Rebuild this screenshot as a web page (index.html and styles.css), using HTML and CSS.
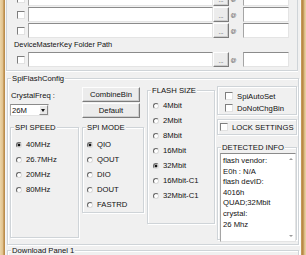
FILE: index.html
```html
<!DOCTYPE html>
<html lang="en">
<head>
    <meta charset="UTF-8">
    <title>Download Tool</title>
    <link rel="stylesheet" href="styles.css">
</head>
<body>
    <div class="window">
        <div class="edge edge-left"></div>

        <div class="client">
            <!-- bin paths -->
            <div class="paths">
                <div class="path-row">
                    <span class="check"></span>
                    <span class="field path-input"></span>
                    <span class="btn dots">...</span>
                    <span class="at">@</span>
                    <span class="field addr-input"></span>
                </div>
                <div class="path-row">
                    <span class="check"></span>
                    <span class="field path-input"></span>
                    <span class="btn dots">...</span>
                    <span class="at">@</span>
                    <span class="field addr-input"></span>
                </div>
                <div class="path-row">
                    <span class="check"></span>
                    <span class="field path-input"></span>
                    <span class="btn dots">...</span>
                    <span class="at">@</span>
                    <span class="field addr-input"></span>
                </div>
                <div class="path-label">DeviceMasterKey Folder Path</div>
                <div class="path-row">
                    <span class="check"></span>
                    <span class="field path-input"></span>
                    <span class="btn dots">...</span>
                    <span class="at">@</span>
                    <span class="field addr-input"></span>
                </div>
            </div>

            <!-- spi flash config -->
            <div class="group spi-config">
                <div class="group-title"><span>SpiFlashConfig</span></div>
                <div class="spi-cols">
                    <div class="col col-speed">
                        <div class="crystal-label">CrystalFreq :</div>
                        <div class="field combo">
                            <span class="combo-text">26M</span>
                            <span class="combo-arrow"></span>
                        </div>
                        <div class="group speed-group">
                            <div class="group-title"><span>SPI SPEED</span></div>
                            <div class="radio-list">
                                <div class="radio on"><i></i>40MHz</div>
                                <div class="radio"><i></i>26.7MHz</div>
                                <div class="radio"><i></i>20MHz</div>
                                <div class="radio"><i></i>80MHz</div>
                            </div>
                        </div>
                    </div>

                    <div class="col col-mode">
                        <div class="btn wide-btn combine">CombineBin</div>
                        <div class="btn wide-btn">Default</div>
                        <div class="group mode-group">
                            <div class="group-title"><span>SPI MODE</span></div>
                            <div class="radio-list">
                                <div class="radio on"><i></i>QIO</div>
                                <div class="radio"><i></i>QOUT</div>
                                <div class="radio"><i></i>DIO</div>
                                <div class="radio"><i></i>DOUT</div>
                                <div class="radio"><i></i>FASTRD</div>
                            </div>
                        </div>
                    </div>

                    <div class="col col-size">
                        <div class="group size-group">
                            <div class="group-title"><span>FLASH SIZE</span></div>
                            <div class="radio-list">
                                <div class="radio"><i></i>4Mbit</div>
                                <div class="radio"><i></i>2Mbit</div>
                                <div class="radio"><i></i>8Mbit</div>
                                <div class="radio"><i></i>16Mbit</div>
                                <div class="radio on"><i></i>32Mbit</div>
                                <div class="radio"><i></i>16Mbit-C1</div>
                                <div class="radio"><i></i>32Mbit-C1</div>
                            </div>
                        </div>
                    </div>

                    <div class="col col-info">
                        <div class="group auto-box">
                            <div class="check-row"><span class="check"></span>SpiAutoSet</div>
                            <div class="check-row"><span class="check"></span>DoNotChgBin</div>
                        </div>
                        <div class="group lock-box">
                            <div class="check-row"><span class="check"></span>LOCK SETTINGS</div>
                        </div>
                        <div class="group info-group">
                            <div class="group-title"><span>DETECTED INFO</span></div>
                            <div class="field info-text">
                                <div class="info-lines">
                                    flash vendor:<br>
                                    E0h : N/A<br>
                                    flash devID:<br>
                                    4016h<br>
                                    QUAD;32Mbit<br>
                                    crystal:<br>
                                    26 Mhz
                                </div>
                                <div class="scrollbar">
                                    <span class="arrow-up"></span>
                                    <span class="arrow-down"></span>
                                </div>
                            </div>
                        </div>
                    </div>
                </div>
            </div>

            <div class="group download">
                <div class="group-title"><span>Download Panel 1</span></div>
            </div>
        </div>

        <div class="edge edge-right"></div>
    </div>
</body>
</html>
```

FILE: styles.css
```css
* {
    margin: 0;
    padding: 0;
    box-sizing: border-box;
}

body {
    width: 306px;
    height: 255px;
    overflow: hidden;
    background: #f0f0f0;
    font-family: 'Liberation Sans', Arial, sans-serif;
    font-size: 7.7px;
    color: #111;
}

.window {
    display: flex;
    height: 255px;
}

.edge {
    flex: none;
    width: 6px;
}

.edge-left {
    background: linear-gradient(to right, #ecd5a8 0, #e0c08a 3px, #b4833f 4px, #c49858 5px, #f7f7f7 5px);
}

.edge-right {
    background: linear-gradient(to right, #f7f7f7 0, #f7f7f7 1px, #c89e60 1px, #b4833f 3px, #d6b47c 4px, #ecd5a8 6px);
}

.client {
    flex: 1;
    min-width: 0;
}

/* shared controls */
.field {
    background: #fff;
    border: 1px solid;
    border-color: #8b8b8b #e4e4e4 #e4e4e4 #a5a5a5;
}

.btn {
    display: flex;
    align-items: center;
    justify-content: center;
    background: #ececec;
    border: 1px solid;
    border-color: #fdfdfd #7c7c7c #7c7c7c #fdfdfd;
    box-shadow: inset -1px -1px 0 #cdcdcd;
}

.check {
    flex: none;
    width: 8px;
    height: 8px;
    background: #fff;
    border: 1px solid;
    border-color: #7e7e7e #e2e2e2 #e2e2e2 #7e7e7e;
}

.group {
    border: 1px solid #cfd4d8;
    box-shadow: inset 1px 1px 0 #fff, 1px 1px 0 #fff;
}

.group-title {
    height: 9px;
    line-height: 9px;
    margin: -5px 0 0 3px;
    white-space: nowrap;
}

.group-title span {
    background: #f0f0f0;
    padding: 0 1px;
}

/* paths */
.paths {
    margin-top: -9px;
    margin-right: 2px;
    padding-bottom: 2px;
    border: 1px solid #cfd4d8;
    border-top: none;
    box-shadow: 0 1px 0 #fff;
}

.path-row {
    display: flex;
    align-items: flex-start;
    height: 16px;
    padding-left: 10px;
}

.path-row .check {
    margin-top: 4px;
    margin-right: 3px;
}

.path-input {
    width: 185px;
    height: 15px;
}

.dots {
    width: 16px;
    height: 15px;
    font-size: 6px;
    line-height: 1;
    padding-top: 3px;
}

.at {
    width: 9px;
    height: 15px;
    line-height: 17px;
    text-align: center;
    font-size: 6px;
    color: #555;
}

.addr-input {
    width: 46px;
    height: 15px;
    margin-left: 5px;
}

.path-label {
    height: 13px;
    line-height: 11px;
    padding-left: 7px;
    font-size: 7.4px;
}

/* spi flash config */
.spi-config {
    margin-top: 7px;
    margin-left: 1px;
    width: 292px;
    height: 167px;
}

.spi-cols {
    display: flex;
    padding-left: 2px;
}

.col {
    display: flex;
    flex-direction: column;
    flex: none;
}

.col-speed {
    width: 69px;
}

.crystal-label {
    margin-top: 8px;
    height: 9px;
    line-height: 9px;
    padding-left: 1px;
}

.combo {
    margin-top: 4px;
    width: 39px;
    height: 12px;
    display: flex;
    align-items: center;
    justify-content: space-between;
    padding-left: 1px;
}

.combo-arrow {
    width: 9px;
    height: 10px;
    background: #e8e8e8;
    border: 1px solid;
    border-color: #fff #8a8a8a #8a8a8a #fff;
    position: relative;
}

.combo-arrow::after {
    content: "";
    position: absolute;
    left: 1px;
    top: 3px;
    border-left: 2.5px solid transparent;
    border-right: 2.5px solid transparent;
    border-top: 3px solid #111;
}

.speed-group {
    margin-top: 11px;
    height: 111px;
}

.radio-list {
    display: flex;
    flex-direction: column;
}

.speed-group .radio-list {
    margin-top: 5px;
    padding-left: 5px;
}

.radio {
    display: flex;
    align-items: center;
    height: 15px;
    white-space: nowrap;
}

.radio i {
    flex: none;
    width: 6px;
    height: 6px;
    margin-right: 4px;
    border-radius: 50%;
    background: #fff;
    border: 1px solid;
    border-color: #666 #dadada #dadada #666;
}

.radio.on i {
    background: radial-gradient(circle, #111 0, #111 1.2px, #fff 1.8px);
}

.col-mode {
    width: 62px;
    margin-left: 3px;
}

.wide-btn {
    width: 58px;
    height: 15px;
}

.combine {
    margin-top: 4px;
    margin-bottom: 1px;
}

.mode-group {
    margin-top: 9px;
    height: 86px;
}

.mode-group .radio-list {
    margin-top: 5px;
    padding-left: 4px;
}

.col-size {
    width: 68px;
    margin-left: 3px;
}

.size-group {
    margin-top: 7px;
    height: 134px;
}

.size-group .radio-list {
    margin-top: 3px;
    padding-left: 5px;
}

.col-info {
    width: 80px;
    margin-left: 2px;
}

.check-row {
    display: flex;
    align-items: center;
    height: 12px;
    white-space: nowrap;
}

.check-row .check {
    margin-right: 4px;
}

.auto-box {
    margin-top: 3px;
    height: 29px;
    padding: 3px 0 0 7px;
}

.lock-box {
    margin-top: 4px;
    height: 16px;
    padding: 1px 0 0 2px;
}

.info-group {
    margin-top: 12px;
    height: 93px;
}

.info-text {
    margin: 1px 0 0 2px;
    height: 89px;
    display: flex;
}

.info-lines {
    flex: 1;
    padding: 2px 0 0 2px;
    line-height: 10.6px;
}

.scrollbar {
    width: 9px;
    display: flex;
    flex-direction: column;
    justify-content: space-between;
    align-items: center;
    padding: 4px 0;
}

.arrow-up,
.arrow-down {
    width: 0;
    height: 0;
    border-left: 2px solid transparent;
    border-right: 2px solid transparent;
}

.arrow-up {
    border-bottom: 2px solid #9a9a9a;
}

.arrow-down {
    border-top: 2px solid #9a9a9a;
}

.download {
    margin-top: 5px;
    margin-left: 1px;
    width: 292px;
    height: 9px;
    border-bottom: none;
}
```
